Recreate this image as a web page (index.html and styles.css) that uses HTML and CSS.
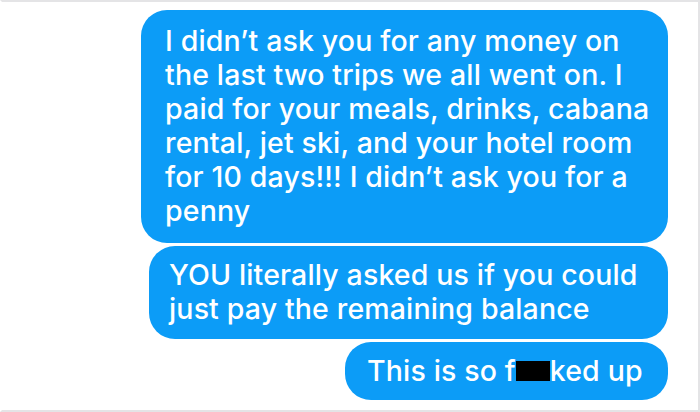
FILE: index.html
```html
<!DOCTYPE html>
<html lang="en">
<head>
<meta charset="utf-8">
<title>Messages</title>
<link rel="stylesheet" href="styles.css">
</head>
<body>
<div class="thread">
  <div class="bubble bubble-long">I didn’t ask you for any money on<br>the last two trips we all went on. I<br>paid for your meals, drinks, cabana<br>rental, jet ski, and your hotel room<br>for 10 days!!! I didn’t ask you for a<br>penny</div>
  <div class="bubble bubble-mid">YOU literally asked us if you could<br>just pay the remaining balance</div>
  <div class="bubble bubble-short">This is so f<span class="redact">uc</span>ked up</div>
</div>
</body>
</html>
```
FILE: styles.css
```css
html, body {
  margin: 0;
  padding: 0;
  background: #ffffff;
}

.thread {
  box-sizing: border-box;
  width: 700px;
  height: 412px;
  border: 2px solid #e4e4e6;
  border-left-color: #ffffff;
  background: #ffffff;
  display: flex;
  flex-direction: column;
  align-items: flex-end;
  gap: 3px;
  padding: 8px 30px 0 0;
  font-family: "Inter", "Noto Sans", sans-serif;
  font-size: 28.5px;
  font-weight: 500;
  letter-spacing: 0.15px;
  line-height: 34px;
  color: #ffffff;
}

.bubble {
  box-sizing: border-box;
  background: #0c9cf7;
  border-radius: 26px;
  white-space: nowrap;
  padding: 12px 16px 14px 22px;
}

.bubble-long {
  width: 527px;
  height: 233px;
  padding-top: 14px;
  padding-left: 24px;
}

.bubble-mid {
  width: 519px;
  height: 93px;
  padding-top: 12px;
  padding-left: 20px;
}

.bubble-short {
  width: 323px;
  height: 58px;
  padding-top: 12px;
}

.redact {
  display: inline-block;
  background: #000000;
  color: #000000;
  height: 20px;
  line-height: 20px;
  overflow: hidden;
  vertical-align: baseline;
  width: 34px;
}
```
